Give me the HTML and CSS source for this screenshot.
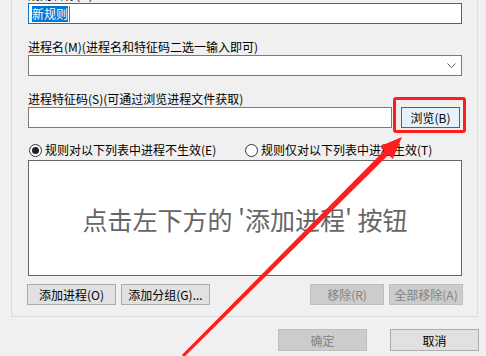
FILE: index.html
```html
<!DOCTYPE html>
<html lang="zh-CN">
<head>
    <meta charset="UTF-8">
    <title>规则</title>
    <link rel="stylesheet" href="styles.css">
</head>
<body>
    <div class="dialog">
        <div class="group">
            <div class="label">规则名称(N)</div>
            <div class="field focused"><span class="sel">新规则</span><span class="caret"></span></div>

            <div class="label spaced">进程名(M)(进程名和特征码二选一输入即可)</div>
            <div class="field combo">
                <svg class="chev" width="9" height="6" viewBox="0 0 9 6"><polyline points="0.5,0.5 4.5,4.5 8.5,0.5" fill="none" stroke="#5a5a5a" stroke-width="1"/></svg>
            </div>

            <div class="label spaced">进程特征码(S)(可通过浏览进程文件获取)</div>
            <div class="row">
                <div class="field sig"></div>
                <button type="button" class="btn browse">浏览(B)</button>
            </div>

            <div class="radios">
                <label class="radio first"><span class="dot checked"></span>规则对以下列表中进程不生效(E)</label>
                <label class="radio"><span class="dot"></span>规则仅对以下列表中进程生效(T)</label>
            </div>

            <div class="list">
                <span class="hint">点击左下方的 '添加进程' 按钮</span>
            </div>

            <div class="actions">
                <div class="pair">
                    <button type="button" class="btn">添加进程(O)</button>
                    <button type="button" class="btn">添加分组(G)...</button>
                </div>
                <div class="pair narrow">
                    <button type="button" class="btn" disabled>移除(R)</button>
                    <button type="button" class="btn" disabled>全部移除(A)</button>
                </div>
            </div>
        </div>

        <div class="footer">
            <button type="button" class="btn big" disabled>确定</button>
            <button type="button" class="btn big">取消</button>
        </div>
    </div>

    <!-- 标注 -->
    <div class="mark"></div>
    <svg class="arrow" width="486" height="356" viewBox="0 0 486 356">
        <polygon fill="#ff1e1e" points="181.9,354.9 384.3,150.5 380,146.2 402,137 392.8,159 388.5,154.7 184.1,357.1"/>
    </svg>
</body>
</html>
```

FILE: styles.css
```css
html, body {
    margin: 0;
    height: 100%;
    overflow: hidden;
}
body {
    background: #f0f0f0;
    font-family: "Noto Sans CJK SC", "Noto Sans", sans-serif;
    font-size: 12px;
    color: #000;
}
.group {
    margin-top: -13px;
    margin-left: 11px;
    border: 1px solid #dcdcdc;
    border-top: none;
    padding: 0 15px 11px 16px;
    box-sizing: border-box;
    width: 467px;
}
.label {
    height: 16px;
    line-height: 16px;
    white-space: nowrap;
}
.label.spaced {
    margin-top: 15px;
}
.field {
    height: 21px;
    width: 434px;
    box-sizing: border-box;
    border: 1px solid #7a7a7a;
    background: #fff;
    display: flex;
    align-items: center;
    padding-left: 3px;
}
.field.focused {
    border-color: #0078d7;
}
.sel {
    background: #0078d7;
    color: #fff;
    height: 16px;
    line-height: 16px;
}
.caret {
    width: 1px;
    height: 16px;
    background: #b35900;
    margin-left: 1px;
}
.combo {
    justify-content: flex-end;
    padding-right: 5px;
}
.row {
    display: flex;
    align-items: center;
}
.field.sig {
    width: 364px;
}
.btn {
    font-family: inherit;
    font-size: 12px;
    height: 21px;
    padding: 0;
    margin: 0;
    background: #e1e1e1;
    border: 1px solid #adadad;
    color: #000;
    box-sizing: border-box;
}
.btn:disabled {
    background: #cccccc;
    border-color: #bfbfbf;
    color: #838383;
}
.browse {
    width: 59px;
    margin-left: 9px;
    background: #e5f1fb;
    border-color: #0078d7;
}
.radios {
    display: flex;
    height: 16px;
    line-height: 16px;
    margin-top: 14px;
}
.radio {
    display: flex;
    align-items: center;
    white-space: nowrap;
}
.radio.first {
    width: 216px;
}
.dot {
    width: 13px;
    height: 13px;
    box-sizing: border-box;
    border: 1px solid #333;
    border-radius: 50%;
    background: #fff;
    margin-right: 3px;
    margin-left: 1px;
    display: flex;
    align-items: center;
    justify-content: center;
}
.dot.checked::after {
    content: "";
    width: 7px;
    height: 7px;
    border-radius: 50%;
    background: #222;
}
.list {
    margin-top: 2px;
    width: 434px;
    height: 116px;
    box-sizing: border-box;
    border: 1px solid #666;
    background: #fff;
    display: flex;
    align-items: center;
    justify-content: center;
}
.hint {
    font-size: 25px;
    color: #666;
    margin-top: 2px;
    white-space: nowrap;
}
.actions {
    display: flex;
    justify-content: space-between;
    margin-top: 8px;
    margin-left: -1px;
    width: 436px;
}
.pair {
    display: flex;
    gap: 5px;
}
.pair .btn {
    width: 89px;
}
.pair.narrow .btn {
    width: 74px;
}
.footer {
    display: flex;
    gap: 23px;
    margin-top: 12px;
    margin-left: 278px;
}
.btn.big {
    width: 89px;
    height: 22px;
}
.mark {
    position: absolute;
    left: 393px;
    top: 97px;
    width: 73px;
    height: 36px;
    box-sizing: border-box;
    border: 3px solid #ff1e1e;
    border-radius: 3px;
}
.arrow {
    position: absolute;
    left: 0;
    top: 0;
    pointer-events: none;
}
```
